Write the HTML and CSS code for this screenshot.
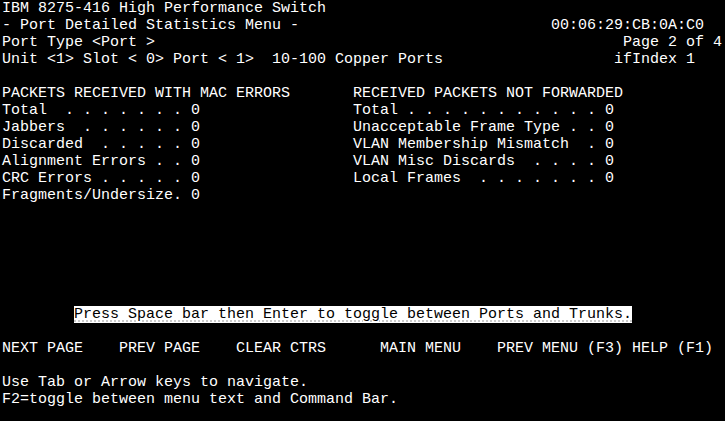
FILE: index.html
```html
<!DOCTYPE html>
<html lang="en">
<head>
  <meta charset="UTF-8">
  <title>Port Detailed Statistics Menu</title>
  <link rel="stylesheet" href="styles.css">
</head>
<body>

<!-- 80x24 terminal screen, one div per row -->
<div class="screen">
  <div class="row">IBM 8275-416 High Performance Switch</div>
  <div class="row">- Port Detailed Statistics Menu -                            00:06:29:CB:0A:C0</div>
  <div class="row">Port Type &lt;Port &gt;                                                    Page 2 of 4</div>
  <div class="row">Unit &lt;1&gt; Slot &lt; 0&gt; Port &lt; 1&gt;  10-100 Copper Ports                   ifIndex 1</div>
  <div class="row"> </div>
  <div class="row">PACKETS RECEIVED WITH MAC ERRORS       RECEIVED PACKETS NOT FORWARDED</div>
  <div class="row">Total  . . . . . . . 0                 Total . . . . . . . . . . . 0</div>
  <div class="row">Jabbers  . . . . . . 0                 Unacceptable Frame Type . . 0</div>
  <div class="row">Discarded  . . . . . 0                 VLAN Membership Mismatch  . 0</div>
  <div class="row">Alignment Errors . . 0                 VLAN Misc Discards  . . . . 0</div>
  <div class="row">CRC Errors . . . . . 0                 Local Frames  . . . . . . . 0</div>
  <div class="row">Fragments/Undersize. 0</div>
  <div class="blank"></div>
  <div class="row hint-row"><span class="hint">Press Space bar then Enter to toggle between Ports and Trunks.</span></div>
  <div class="row"> </div>
  <div class="row">NEXT PAGE    PREV PAGE    CLEAR CTRS      MAIN MENU    PREV MENU (F3) HELP (F1)</div>
  <div class="row"> </div>
  <div class="row">Use Tab or Arrow keys to navigate.</div>
  <div class="row">F2=toggle between menu text and Command Bar.</div>
</div>

</body>
</html>
```

FILE: styles.css
```css
html, body {
  margin: 0;
  padding: 0;
  background-color: #000000;
}

.screen {
  padding-left: 2px;
  font-family: "Liberation Mono", "DejaVu Sans Mono", monospace;
  font-size: 15px;
  line-height: 17px;
  color: #ffffff;
}

.row {
  height: 17px;
  white-space: pre;
}

/* six empty terminal rows */
.blank {
  height: 102px;
}

.hint-row {
  padding-left: 72px;
}

.hint {
  display: inline-block;
  height: 17px;
  background-color: #ffffff;
  color: #000000;
  text-decoration: underline dotted #b8b8b8;
  text-underline-offset: 3px;
}
```
